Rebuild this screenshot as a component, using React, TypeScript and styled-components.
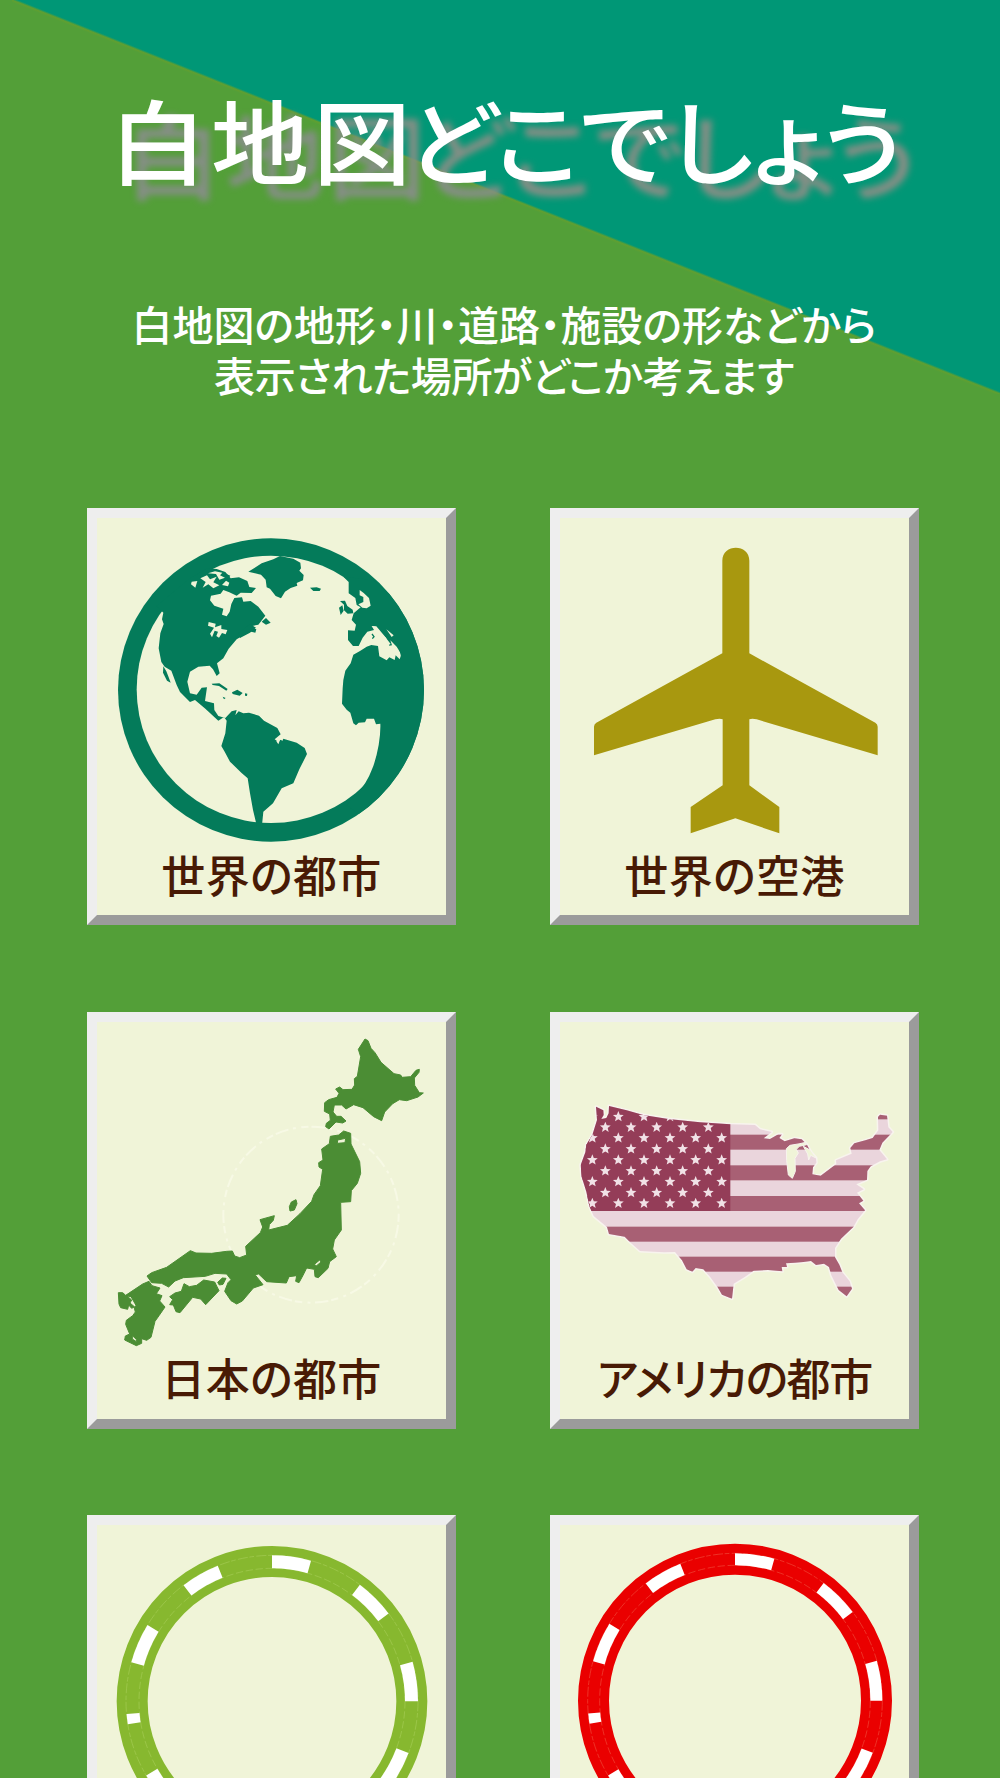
import React from 'react';
import styled, { createGlobalStyle } from 'styled-components';

const GlobalStyle = createGlobalStyle`
  * { box-sizing: border-box; }
  body { margin: 0; background: #539f38; }
`;

const Page = styled.div`
  width: 1000px;
  height: 1778px;
  overflow: hidden;
  display: flex;
  flex-direction: column;
  font-family: "Liberation Sans", "Noto Sans CJK JP", sans-serif;
  background:
    linear-gradient(to top right, #539f38 49.7%, #619f30 50%, #009776 50.3%) 12px 0 / 988px 394px no-repeat,
    #539f38;
`;

const Header = styled.header`
  display: flex;
  flex-direction: column;
  align-items: flex-start;
  height: 508px;
  flex: none;
  color: #fff;
  white-space: nowrap;
`;

const Title = styled.h1`
  margin: 86px 0 0 109px;
  font-size: 98px;
  line-height: 120px;
  font-weight: 500;
  font-feature-settings: "palt";
  text-shadow: 15px 16px 8px #868f86;
  transform: scaleY(0.94);
`;

const Spaced = styled.span<{ $gap: number; $shift?: number }>`
  letter-spacing: ${(p) => p.$gap}px;
  margin-left: ${(p) => p.$shift ?? 0}px;
`;

const Lead = styled.p`
  margin: 96px 0 0;
  padding-left: 8px;
  width: 100%;
  text-align: center;
  font-size: 41px;
  line-height: 51px;
  font-weight: 500;
  font-feature-settings: "palt";
`;

const Grid = styled.main`
  display: grid;
  grid-template-columns: 369px 369px;
  grid-auto-rows: 417px;
  gap: 86.5px 94px;
  padding-left: 87px;
`;

const Card = styled.button`
  display: flex;
  flex-direction: column;
  align-items: center;
  margin: 0;
  padding: 0;
  border: 10px solid;
  border-color: #eeeeee #9b9b9b #9b9b9b #eeeeee;
  background: #f0f4d8;
  color: #481a05;
  font-family: inherit;
`;

const Art = styled.svg`
  display: block;
  width: 349px;
  height: 330px;
  flex: none;
`;

const Label = styled.span<{ $gap?: number; $line?: number }>`
  font-size: 44px;
  font-weight: 500;
  line-height: ${(p) => p.$line ?? 60}px;
  letter-spacing: ${(p) => p.$gap ?? 0.4}px;
  white-space: nowrap;
  font-feature-settings: "palt";
`;

const PAPER = '#f0f4d8';

function Globe() {
  return (
    <Art viewBox="51 54 1047 990">
      <defs>
        <clipPath id="globe">
          <ellipse cx="573" cy="570" rx="459" ry="455" />
        </clipPath>
      </defs>
      <ellipse cx="573" cy="570" rx="459" ry="455" fill="#047b5a" />
      <ellipse cx="573" cy="568" rx="403" ry="401" fill={PAPER} />
      <g fill="#047b5a" clipPath="url(#globe)">
        <path d="M230 318L250 338L246 358L251 372L241 400L236 445L244 486L254 500L274 512L290 555L300 576L330 606L345 600L376 626L415 662L432 651L440 662L436 700L424 738L434 755L450 785L484 818L503 835L510 880L519 930L530 976L546 976L550 935L579 910L605 865L640 850L658 808L681 762L674 744L650 728L610 716L592 724L584 718L602 703L592 684L552 662L537 647L507 638L490 640L476 634L466 646L470 630L455 634L436 654L415 648L403 630L402 610L375 603L381 562L365 563L350 584L330 580L322 545L330 515L355 500L389 497L399 508L410 528L419 520L411 490L430 475L446 446L470 418L492 405L504 393L526 398L529 388L506 380L535 374L556 347L535 320L512 303L490 305L486 292L463 294L454 312L449 335L440 349L426 344L430 326L403 317L390 301L393 287L422 281L430 270L448 277L470 287L482 278L515 279L528 264L508 261L502 243L477 232L452 235L436 216L410 207L382 205L330 235Z" />
        <path d="M505 215L545 190L580 178L600 168L640 176L661 188L663 205L658 212L671 225L669 241L650 249L652 257L632 264L615 275L603 295L587 288L570 266L560 262L557 239L543 224Z" />
        <path d="M690 263L710 262L723 266L719 273L700 273ZM545 365L558 354L572 368L558 374ZM475 400L510 372L528 383L510 398L480 414ZM395 551L418 550L443 567L439 572L417 558L398 555ZM456 577L472 569L488 579L479 587L458 582ZM495 580L502 581L501 588L495 587ZM428 590L437 594L432 598ZM250 499L259 514L266 532L272 548L261 542L249 518Z" />
        <path d="M780 303L795 302L802 318L818 329L820 340L803 341L792 331L792 314ZM777 323L787 316L791 332L782 345Z" />
        <path d="M790 230L806 246L806 280L826 294L830 315L842 322L821 340L815 360L828 374L824 392L804 391L804 420L819 438L836 438L848 413L862 395L882 390L875 378L889 382L905 402L918 413L928 437L936 436L931 421L950 440L964 463L959 478L947 466L944 480L928 472L920 481L898 469L894 438L874 435L860 440L840 453L820 464L812 490L796 512L790 540L788 565L786 611L800 629L811 638L820 670L828 676L836 668L855 667L860 656L882 656L888 673L901 671Q902 700 896 735Q888 780 876 808Q860 852 829 882L800 915L860 960L1040 800V380L880 240Z" />
      </g>
      <g fill={PAPER}>
        <path d="M346 263L333 253L335 245L352 243ZM368 263L377 246L361 235L381 226L390 238L410 230L400 247L418 256L400 265L385 253ZM384 220L405 214L427 218L420 226L435 233L418 239L408 222ZM438 242L448 248L444 259L426 255Z" />
        <path d="M386 366L407 371L405 382L424 375L424 387L442 390L437 403L426 399L417 413L409 408L414 395L404 392L396 412L390 401L402 383L384 377Z" />
        <path d="M839 270L851 279L867 294L872 317L860 325L847 323L835 313L850 306L850 291L839 286Z" />
        <path d="M875 378L889 379L911 405L932 432L924 436L905 409ZM919 388L941 406L935 411Z" />
        <path d="M589 724L612 711L607 723L601 718L595 733Z" />
      </g>
      <path d="M876 402L882 410L877 416M437 223L448 228L442 237" fill="none" stroke="#047b5a" strokeWidth="4" />
    </Art>
  );
}

function Plane() {
  return (
    <Art viewBox="60 54 1047 990">
      <path
        fill="#a8980f"
        d="M547 182C547 130 628 130 628 182V460L1006 668Q1013 672 1013 680V766L650 658Q636 654 628 658V856L718 921V1000L586 955L452 1000V921L548 856V658Q540 654 526 658L162 766V680Q162 672 169 668L547 460Z"
      />
    </Art>
  );
}

function Japan() {
  return (
    <Art viewBox="51 66 1047 990">
      <ellipse cx="693" cy="644" rx="263" ry="264" fill="none" stroke="#f7f9e5" strokeWidth="6" strokeDasharray="22 9 40 14 9 16" />
      <g fill="#4b8d34" stroke="#4b8d34" strokeWidth="3" strokeLinejoin="round">
        <path d="M855 117L864 122L873 145L885 158L903 187L942 221L962 225L966 232L992 230L1008 211L1018 208L1017 217L1003 234L1004 256L1018 278L1030 279L1014 291L980 302L958 299L938 311L914 336L905 362L881 350L849 323L821 314L798 327L785 315L763 315L759 336L770 349L783 349L798 363L788 369L768 366L747 387L737 380L739 370L751 361L749 342L733 334L734 308L746 299L771 292L777 280L767 267L779 261L789 269L816 268L824 255L823 236L832 229L842 170L835 148Z" />
        <path fillRule="evenodd" d="M751 409L776 405L791 393L812 400L813 432L839 485L842 520L832 550L814 572L812 605L782 607L784 690L763 720L758 747L769 770L749 785L744 805L715 833L705 830L703 808L680 804L668 828L657 848L647 844L650 827L627 830L619 849L560 845L536 822L525 824L549 854L520 864L487 903L470 912L453 902L434 874L444 848L453 839L440 822L405 820L376 829L310 833L285 843L266 861L245 850L215 848L201 828L215 818L260 802L331 752L348 759L395 760L440 754L457 753L464 768L479 773L500 765L497 739L541 698L548 681L540 659L583 647L580 661L568 674L566 690L622 676L660 641L695 604L702 584L721 557L728 508L717 501L716 488L729 480L725 447L748 431ZM773 420L797 415L795 428L772 430ZM702 794L719 780L723 786L710 797Z" />
        <path d="M634 606L648 599L651 611L643 630L630 633L628 620ZM413 847L427 834L438 835L429 853L418 855Z" />
        <path d="M269 890L285 879L304 874L312 851L328 860L350 856L371 840L404 846L417 872L377 914L362 897L338 892L300 938L288 935L280 915L269 914L278 899Z" />
        <path fillRule="evenodd" d="M115 878L128 878L137 886L188 852L207 844L216 857L240 864L229 881L246 887L239 903L255 921L237 947L225 964L213 1012L200 1021L185 1016L185 1030L169 1037L134 1020L136 1008L149 1002L137 973L139 961L158 947L166 936L162 921L155 925L146 915L143 928L122 923L117 912ZM141 888L153 890L168 916L164 921L150 909L155 900ZM157 1007L169 1018L169 1025L157 1017Z" />
      </g>
    </Art>
  );
}

const LAND =
  'M168 320L190 331L191 345L184 357L199 354L206 340L207 318L260 331L310 345L385 357L480 367L571 373L645 375L660 388L695 396L671 415L690 417L715 403L726 403L718 414L734 424L763 415L785 418L800 433L812 455L828 474L829 488L819 502L817 523L842 527L889 492L888 481L935 461L931 444L943 430L976 421L998 414L1015 391L1014 351L1020 344L1041 347L1045 382L1058 396L1027 428L1018 450L1041 478L1020 484L992 499L982 513L981 539L949 553L971 568L951 578L970 602L957 610L975 631L953 658L940 681L903 716L885 744L885 772L898 794L907 817L929 844L936 866L920 889L896 870L874 826L867 801L852 791L828 795L813 783L790 786L764 788L738 790L741 801L725 801L727 814L684 810L641 812L614 831L581 851L576 896L546 884L533 862L510 830L490 808L467 804L457 815L440 808L426 781L405 756L372 757L300 753L272 728L254 710L207 702L201 681L161 648L148 618L139 575L125 530L122 495L136 457L139 434L157 405L171 360Z';

const LAKES = 'M739 446L750 436L780 431L797 427L800 434L778 439L769 448L775 459L765 475L766 514L757 535L745 525L740 482ZM790 439L812 451L828 474L812 466L806 480L803 462Z';

const STRIPES = [404, 496, 588, 680, 770, 860];

function starPoints(cx: number, cy: number) {
  return Array.from({ length: 10 }, (_, i) => {
    const r = i % 2 ? 7.5 : 17;
    const a = (i * Math.PI) / 5;
    return `${(cx + r * Math.sin(a)).toFixed(1)},${(cy - r * Math.cos(a)).toFixed(1)}`;
  }).join(' ');
}

const STARS = [350, 382, 414, 447, 480, 513, 545, 578, 610].flatMap((y, row) =>
  (row % 2 ? [196, 273, 350, 428, 505] : [157, 235, 312, 390, 467, 545]).map((x) => [x, y]),
);

function America() {
  return (
    <Art viewBox="60 66 1047 990">
      <defs>
        <clipPath id="land">
          <path d={LAND} />
        </clipPath>
      </defs>
      <path d={LAND} fill="none" stroke="#f8f4ee" strokeWidth="9" strokeLinejoin="round" />
      <g clipPath="url(#land)">
        <rect x="110" y="300" width="960" height="610" fill="#ead5dc" />
        <rect x="571" y="340" width="500" height="18" fill="#a86074" />
        {STRIPES.map((y) => (
          <rect key={y} x="110" y={y} width="960" height="45" fill="#a86074" />
        ))}
        <rect x="110" y="300" width="461" height="333" fill="#943d58" />
        {STARS.map(([x, y]) => (
          <polygon key={`${x}-${y}`} points={starPoints(x, y)} fill="#f1e1e6" />
        ))}
      </g>
      <path d={LAKES} fill={PAPER} stroke="#f8f4ee" strokeWidth="3" strokeLinejoin="round" />
    </Art>
  );
}

interface ChipProps {
  viewBox: string;
  cx: number;
  cy: number;
  outer: number;
  inner: number;
  dashOuter: number;
  dashInner: number;
  color: string;
  line: string;
}

const DASHES = [[0, 15.5], [37, 53], [74.3, 90], [110.7, 126.5], [147, 163], [-163, -152], [-136, -120.5], [-99, -95], [-74.5, -58.5], [-37.3, -21.8]];

function Chip({ viewBox, cx, cy, outer, inner, dashOuter, dashInner, color, line }: ChipProps) {
  const at = (r: number, deg: number) => {
    const a = (deg * Math.PI) / 180;
    return `${(cx + r * Math.sin(a)).toFixed(1)} ${(cy - r * Math.cos(a)).toFixed(1)}`;
  };
  return (
    <Art viewBox={viewBox}>
      <circle cx={cx} cy={cy} r={(outer + inner) / 2} fill="none" stroke={color} strokeWidth={outer - inner} />
      <circle cx={cx} cy={cy} r={dashOuter} fill="none" stroke={line} strokeWidth="2" strokeDasharray="30 5 14 7" />
      <circle cx={cx} cy={cy} r={dashInner} fill="none" stroke={line} strokeWidth="2" strokeDasharray="22 8" />
      {DASHES.map(([a, b]) => (
        <path
          key={a}
          fill="#fff"
          d={`M${at(dashOuter, a)}A${dashOuter} ${dashOuter} 0 0 1 ${at(dashOuter, b)}L${at(dashInner, b)}A${dashInner} ${dashInner} 0 0 0 ${at(dashInner, a)}Z`}
        />
      ))}
    </Art>
  );
}

export default function App() {
  return (
    <Page>
      <GlobalStyle />
      <Header>
        <Title>
          <Spaced $gap={4}>白地図</Spaced>
          <Spaced $gap={0} $shift={-8}>どこでしょう</Spaced>
        </Title>
        <Lead>
          白地図の地形・川・道路・施設の形などから
          <br />
          <Spaced $gap={-0.4}>表示された場所がどこか考えます</Spaced>
        </Lead>
      </Header>
      <Grid>
        <Card>
          <Globe />
          <Label>世界の都市</Label>
        </Card>
        <Card>
          <Plane />
          <Label>世界の空港</Label>
        </Card>
        <Card>
          <Japan />
          <Label $line={58}>日本の都市</Label>
        </Card>
        <Card>
          <America />
          <Label $line={58} $gap={-1.4}>アメリカの都市</Label>
        </Card>
        <Card>
          <Chip viewBox="51 75 1047 990" cx={576} cy={604} outer={466} inner={373} dashOuter={438} dashInner={399} color="#87b82f" line="#a5cc55" />
        </Card>
        <Card>
          <Chip viewBox="60 75 1047 990" cx={585} cy={602} outer={471} inner={378} dashOuter={442} dashInner={406} color="#ea0000" line="#f04a3a" />
        </Card>
      </Grid>
    </Page>
  );
}
